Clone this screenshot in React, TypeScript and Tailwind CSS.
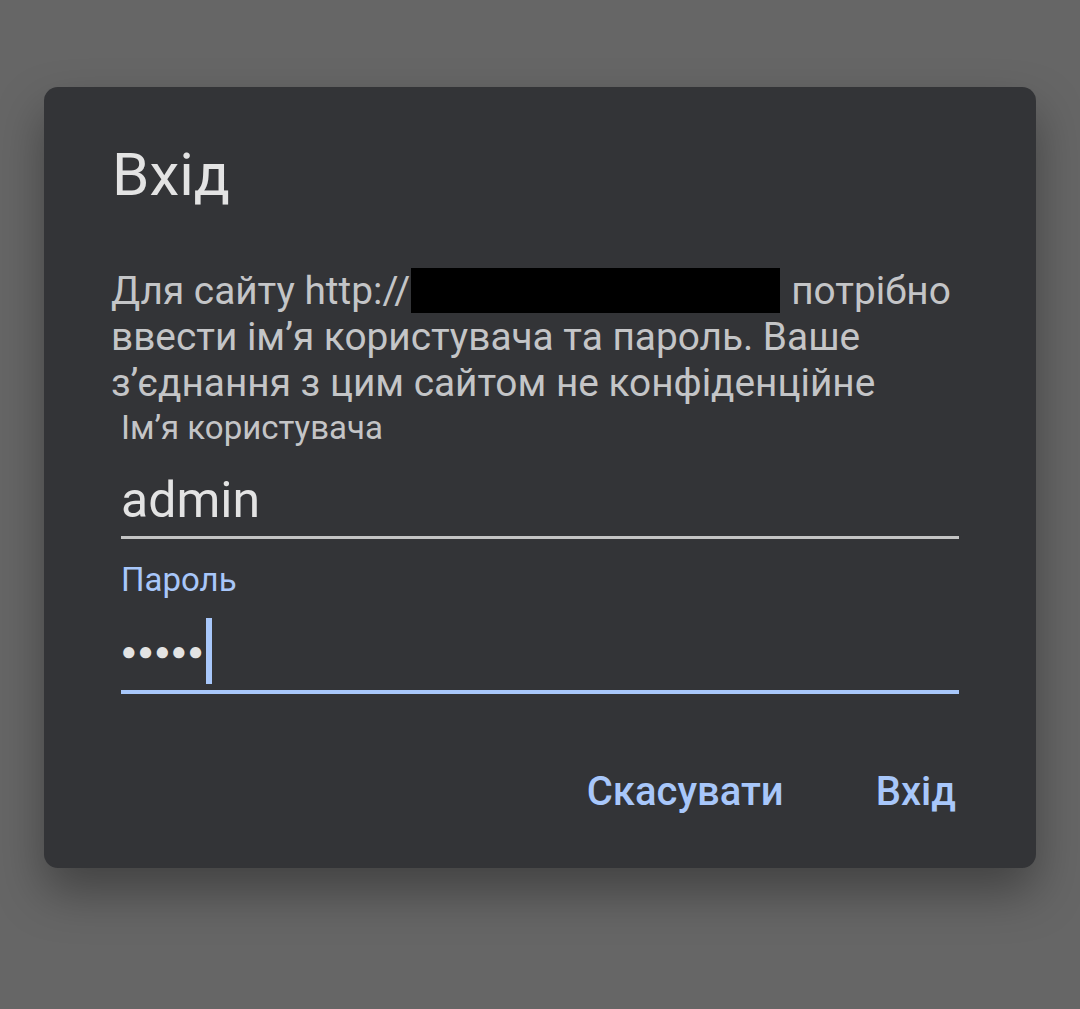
export default function App() {
  return (
    <div className="min-h-[1009px] w-[1080px] bg-[#666666] pt-[87px] pl-[44px]" style={{ fontFamily: 'Roboto, "Noto Sans", sans-serif' }}>
      <div className="w-[992px] h-[781px] rounded-[14px] bg-[#333437] shadow-[0_24px_48px_rgba(0,0,0,0.35)] pl-[67px] pr-[77px] pt-[58px]">
        <h1 className="text-[60px] leading-[60px] text-[#e3e3e3] pl-[1px]">Вхід</h1>

        <p className="mt-[63px] text-[38.8px] leading-[46px] text-[#c4c5c7]">
          Для сайту http://<span className="inline-block align-top w-[369px] h-[45px] bg-black ml-[1px] mr-[11px]" />
          потрібно ввести ім’я користувача та пароль. Ваше з’єднання з цим сайтом не конфіденційне
        </p>

        <div className="pl-[10px]">
          <div className="mt-[4px] text-[33px] leading-[36px] text-[#c4c5c7]">Ім’я користувача</div>
          <div className="mt-[26px] text-[50px] leading-[56px] text-[#e3e3e3]">admin</div>
          <div className="mt-[8px] h-[3px] bg-[#c4c4c4]" />

          <div className="mt-[23px] text-[33px] leading-[36px] text-[#a8c7fa]">Пароль</div>
          <div className="mt-[20px] flex items-center h-[66px]">
            <span className="text-[26px] tracking-[1px] text-[#e3e3e3]">●●●●●</span>
            <span className="w-[6px] h-[66px] bg-[#a8c7fa] ml-[1px]" />
          </div>
          <div className="mt-[6px] h-[4px] bg-[#a8c7fa]" />
        </div>

        <div className="mt-[76px] pr-[3px] flex justify-end gap-[92px] text-[40px] leading-[44px] font-medium text-[#a8c7fa]">
          <button>Скасувати</button>
          <button>Вхід</button>
        </div>
      </div>
    </div>
  );
}
